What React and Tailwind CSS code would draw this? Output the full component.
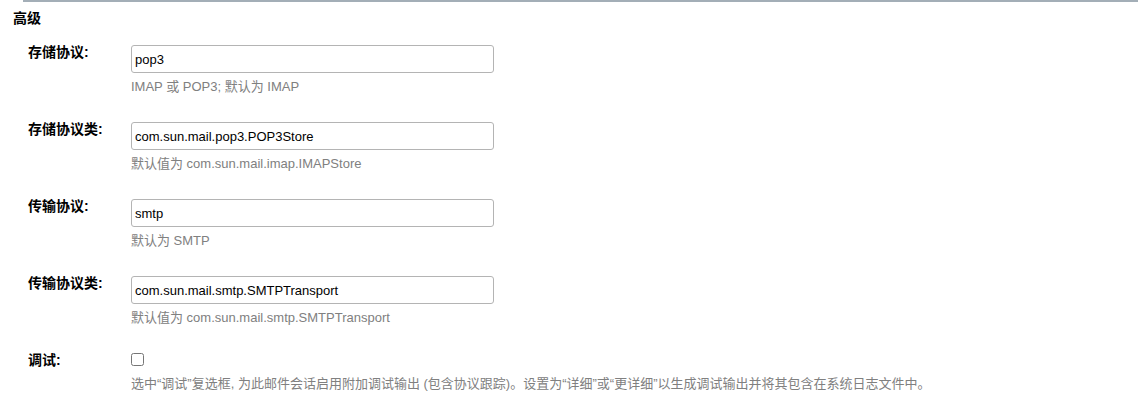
import React from "react";

const font = { fontFamily: '"Liberation Sans", Arial, "Noto Sans CJK SC", sans-serif' };

const rows = [
  { label: "存储协议:", value: "pop3", help: "IMAP 或 POP3; 默认为 IMAP" },
  { label: "存储协议类:", value: "com.sun.mail.pop3.POP3Store", help: "默认值为 com.sun.mail.imap.IMAPStore" },
  { label: "传输协议:", value: "smtp", help: "默认为 SMTP" },
  { label: "传输协议类:", value: "com.sun.mail.smtp.SMTPTransport", help: "默认值为 com.sun.mail.smtp.SMTPTransport" },
];

function Row({ label, children }) {
  return (
    <div className="flex mb-[27px]">
      <div className="w-[131px] shrink-0 pl-[28px] font-bold text-[14px] leading-[16px] text-black -mt-[1px]">
        {label}
      </div>
      <div className="flex flex-col">{children}</div>
    </div>
  );
}

export default function App() {
  return (
    <div className="w-[1138px] h-[406px] bg-white overflow-hidden text-[13px]" style={font}>
      <div className="ml-[23px] h-[2px] bg-[#a3aeb7]" />

      <div className="pl-[13px] mt-[8px] mb-[19px] font-bold text-[14px] leading-[16px] text-black">高级</div>

      {rows.map((r) => (
        <Row key={r.label} label={r.label}>
          <input
            defaultValue={r.value}
            style={font}
            className="w-[363px] h-[28px] px-[3px] border border-[#b4b4b4] rounded-[3px] text-[13px] text-black outline-none"
          />
          <div className="mt-[6px] leading-[16px] text-[#808080]">{r.help}</div>
        </Row>
      ))}

      <Row label="调试:">
        <input type="checkbox" className="w-[13px] h-[13px] m-0 mt-0 accent-white" />
        <div className="mt-[10px] leading-[16px] text-[#808080] whitespace-nowrap">
          选中“调试”复选框, 为此邮件会话启用附加调试输出 (包含协议跟踪)。设置为“详细”或“更详细”以生成调试输出并将其包含在系统日志文件中。
        </div>
      </Row>
    </div>
  );
}
